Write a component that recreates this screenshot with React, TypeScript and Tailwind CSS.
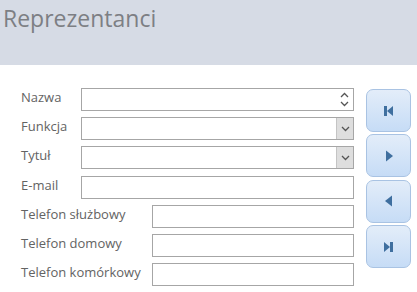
import React from 'react';

const font = { fontFamily: '"Open Sans", "Segoe UI", sans-serif' };

function Chevron({ up = false }: { up?: boolean }) {
  return (
    <svg width="9" height="6" viewBox="0 0 9 6" className="block">
      <path
        d={up ? 'M1 5 L4.5 1.5 L8 5' : 'M1 1 L4.5 4.5 L8 1'}
        fill="none"
        stroke="#555"
        strokeWidth="1.3"
      />
    </svg>
  );
}

function Field({ label, kind, wide = true }: { label: string; kind?: 'spin' | 'combo'; wide?: boolean }) {
  return (
    <div className="flex items-center h-[23px]">
      <div className={`${wide ? 'w-[60px]' : 'w-[131px]'} text-[13px] text-[#636363] leading-none -mt-[4px]`}>{label}</div>
      <div className="flex-1 h-full border border-[#a6a6a6] bg-white flex justify-end">
        {kind === 'spin' && (
          <div className="w-[17px] flex flex-col items-center justify-center gap-[3px]">
            <Chevron up />
            <Chevron />
          </div>
        )}
        {kind === 'combo' && (
          <div className="w-[17px] h-full bg-[#dedede] border-l border-[#c4c4c4] flex items-center justify-center">
            <Chevron />
          </div>
        )}
      </div>
    </div>
  );
}

function NavButton({ children }: { children: React.ReactNode }) {
  return (
    <button className="w-[45px] h-[43px] rounded-[7px] border border-[#a9c3e3] bg-gradient-to-b from-[#e3edf9] to-[#c6dcf6] flex items-center justify-center">
      {children}
    </button>
  );
}

export default function App() {
  return (
    <div className="w-[417px] h-[292px] bg-white overflow-hidden" style={font}>
      <div className="h-[65px] bg-[#d6dbe5] pl-[3px] pt-[2px]">
        <h1 className="text-[23px] text-[#7d7f84] leading-[32px]">Reprezentanci</h1>
      </div>
      <div className="flex pl-[21px] pt-[23px] pr-[6px]">
        <div className="w-[334px] flex flex-col gap-[6.2px]">
          <Field label="Nazwa" kind="spin" />
          <Field label="Funkcja" kind="combo" />
          <Field label="Tytuł" kind="combo" />
          <Field label="E-mail" />
          <Field label="Telefon służbowy" wide={false} />
          <Field label="Telefon domowy" wide={false} />
          <Field label="Telefon komórkowy" wide={false} />
        </div>
        <div className="ml-[12px] mt-[1px] flex flex-col gap-[2.4px]">
          <NavButton>
            <svg width="11" height="12" viewBox="0 0 11 12">
              <rect x="1" y="1" width="3" height="10" fill="#3f6f9f" />
              <path d="M10 1 L4 6 L10 11 Z" fill="#3f6f9f" />
            </svg>
          </NavButton>
          <NavButton>
            <svg width="10" height="12" viewBox="0 0 10 12">
              <path d="M2 0.5 L9 6 L2 11.5 Z" fill="#3f6f9f" />
            </svg>
          </NavButton>
          <NavButton>
            <svg width="10" height="12" viewBox="0 0 10 12">
              <path d="M8 0.5 L1 6 L8 11.5 Z" fill="#3f6f9f" />
            </svg>
          </NavButton>
          <NavButton>
            <svg width="11" height="12" viewBox="0 0 11 12">
              <path d="M1 1 L7 6 L1 11 Z" fill="#3f6f9f" />
              <rect x="7" y="1" width="3" height="10" fill="#3f6f9f" />
            </svg>
          </NavButton>
        </div>
      </div>
    </div>
  );
}
